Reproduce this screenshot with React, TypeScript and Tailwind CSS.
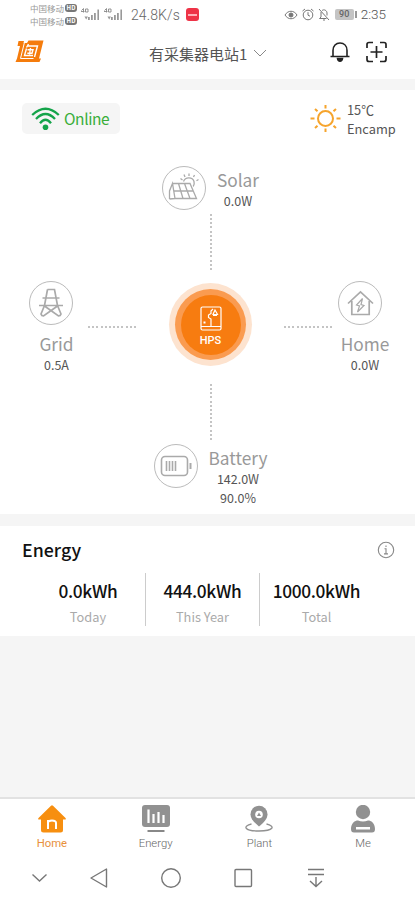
import type { ReactNode } from "react";
import clsx from "clsx";

const stats = [
  { value: "0.0kWh", label: "Today" },
  { value: "444.0kWh", label: "This Year" },
  { value: "1000.0kWh", label: "Total" },
];

function Signal() {
  return (
    <svg width="20" height="13" viewBox="0 0 20 13" fill="#999">
      <path d="M0.5 2.5l2-2v4M0 3.5h3.5M4.5 1h2.5v3h-2.5z" fill="none" stroke="#888" strokeWidth="0.9" />
      <path d="M7 9h1.8v3H7zM10 7h1.8v5H10zM13 5h1.8v7H13zM16.4 1.5H18V12h-1.6z" />
      <path d="M3.5 8.5l1.7 3 1.7-3z" />
    </svg>
  );
}

function Carrier() {
  return (
    <div className="flex h-[13px] items-center gap-px">
      <span className="text-[8.5px] leading-none text-[#999]">中国移动</span>
      <span className="flex h-[8px] w-[12px] items-center justify-center rounded-[3px] bg-[#777] text-[6px] font-bold leading-none text-white">
        HD
      </span>
    </div>
  );
}

function StatusBar() {
  return (
    <div className="flex h-[29px] items-center pl-[30px] pr-[29px] font-['Roboto',sans-serif]">
      <div className="flex w-[51px] flex-col font-['Noto_Sans_CJK_SC',sans-serif]">
        <Carrier />
        <Carrier />
      </div>
      <div className="flex gap-[3px]">
        <Signal />
        <Signal />
      </div>
      <span className="ml-[7px] w-[49px] whitespace-nowrap text-[14px] font-light leading-none tracking-[0.1px] text-[#666]">
        24.8K/s
      </span>
      <span className="ml-[6px] flex h-[13px] w-[13px] items-center justify-center rounded-[3px] bg-[#ee3347]">
        <span className="h-[2px] w-[9px] bg-[#ffb0b8]" />
      </span>
      <div className="ml-auto flex items-center">
        <svg width="14" height="12" viewBox="0 0 14 12" fill="none" stroke="#777" strokeWidth="1">
          <path d="M1 6c3-5 9-5 12 0c-3 5-9 5-12 0z" />
          <circle cx="7" cy="6" r="2" fill="#777" />
        </svg>
        <svg className="ml-[3px]" width="14" height="13" viewBox="0 0 14 13" fill="none" stroke="#777" strokeWidth="1">
          <circle cx="7" cy="7" r="4.8" />
          <path d="M1.5 3l2.5-2M12.5 3L10 1M7 4.2v3l2 1" />
        </svg>
        <svg className="ml-[3px]" width="12" height="13" viewBox="0 0 12 13" fill="none" stroke="#777" strokeWidth="1">
          <path d="M1 1l10 11M3 4v5l-1.5 1.5h7M4 2.6C6 .8 9 2.5 9 5v2.5M5 12h2" />
        </svg>
        <span className="ml-[5px] flex h-[11px] w-[19px] items-center justify-center rounded-[2px] bg-[#c4c4c4] text-[9px] font-medium leading-none text-[#666]">
          90
        </span>
        <span className="ml-px h-[7px] w-[2px] bg-[#999]" />
        <span className="ml-[4px] text-[13.5px] font-light leading-none text-[#555]">2:35</span>
      </div>
    </div>
  );
}

function Header() {
  return (
    <header className="flex h-[50px] items-center pl-[15px] pr-[28px]">
      <svg className="-mt-[6px]" width="29" height="23" viewBox="0 0 29 23">
        <path d="M3.5 1H9L8.5 3H12L13.5 .5H28.5L24 18.500H26L24.500 22H.5L2 18.500L5 6H2.500z" fill="#f57c0c" />
        <path d="M9.3 3L5.5 18.500H18.500" fill="none" stroke="#fff" strokeWidth="1" />
        <path d="M13.500 4L11.500 7.500M12.500 6H22.500L19.500 17M11.500 8.500L9.500 15.500H18M12.500 9.800H18L17 13.300H12.300M15.500 8L14.500 14.500" fill="none" stroke="#fff" strokeWidth="1.4" />
      </svg>
      <div className="-mt-px ml-[105px] flex items-center whitespace-nowrap text-[15px] leading-none text-[#555]">
        有采集器电站1
        <svg className="ml-[6px]" width="14" height="9" viewBox="0 0 14 9" fill="none" stroke="#888" strokeWidth="1">
          <path d="M1 1l6 6l6-6" />
        </svg>
      </div>
      <div className="-mt-[4px] ml-auto flex items-center gap-[15px]">
        <svg width="22" height="22" viewBox="0 0 22 22" fill="none" stroke="#222" strokeWidth="1.6">
          <path d="M4 15.500V9.500C4 4.800 7 2 11 2s7 2.800 7 7.500v6M1.500 15.500h19" />
          <path d="M8.500 17.500c.5 3.600 4.500 3.600 5 0z" fill="#222" />
        </svg>
        <svg width="21" height="22" viewBox="0 0 21 22" fill="none" stroke="#222" strokeWidth="1.7">
          <path d="M1 7V3.500Q1 1.500 3 1.500H7M14 1.500h4q2 0 2 2V7M20 15v3.500q0 2-2 2h-4M7 20.500H3q-2 0-2-2V15M10.500 5v12M4.500 11h12" />
        </svg>
      </div>
    </header>
  );
}

function IconRing({ children }: { children: ReactNode }) {
  return (
    <div className="flex h-[44px] w-[44px] shrink-0 items-center justify-center rounded-full border border-[#bbb]">
      {children}
    </div>
  );
}

function Reading({ name, values, className }: { name: string; values: string[]; className?: string }) {
  return (
    <div className={clsx("flex flex-col items-center whitespace-nowrap", className)}>
      <span className="text-[17.3px] leading-[24px] text-[#999]">{name}</span>
      {values.map((v) => (
        <span key={v} className="text-[12.5px] leading-[18.5px] text-[#555]">
          {v}
        </span>
      ))}
    </div>
  );
}

function VLine() {
  return (
    <div className="ml-[210px] flex h-[56px] flex-col justify-between">
      {Array.from({ length: 14 }, (_, i) => (
        <span key={i} className="h-[2px] w-[2px] bg-[#c4c4c4]" />
      ))}
    </div>
  );
}

function HLine() {
  return (
    <div className="mt-[56px] flex w-[48px] justify-between">
      {Array.from({ length: 12 }, (_, i) => (
        <span key={i} className="h-[2px] w-[2px] bg-[#c4c4c4]" />
      ))}
    </div>
  );
}

function Flow() {
  return (
    <section className="h-[424px] bg-white">
      <div className="flex h-[44px] justify-between pl-[22px] pr-[19px] pt-[13px]">
        <div className="flex h-[31px] w-[98px] items-center rounded-[5px] bg-[#f5f5f5] pl-[9px]">
          <svg width="29" height="24" viewBox="0 0 29 24" fill="none" stroke="#14a44a" strokeWidth="2.3">
            <path d="M1.2 8Q14.5-4.5 27.8 8M5 12Q14.5 2 24 12M9 16.2Q14.5 9.3 20 16.2" />
            <circle cx="14.5" cy="20.3" r="2.8" fill="#14a44a" stroke="none" />
          </svg>
          <span className="ml-[4px] text-[15.5px] leading-none tracking-[-0.4px] text-[#3aae3a]">Online</span>
        </div>
        <div className="flex">
          <svg className="mt-px" width="31" height="29" viewBox="-15.5 -14.5 31 29" fill="none" stroke="#f6a42c" strokeWidth="2">
            <circle r="7.5" />
            <path d="M0-13.5v3.5M0 10v3.5M-15 0h4M11 0h4M-10.5-9.5l2.5 2.3M10.5-9.5l-2.5 2.3M-10.5 9.5l2.5-2.3M10.5 9.5l-2.5-2.3" />
          </svg>
          <div className="-mt-[3px] ml-[6px] flex w-[49px] flex-col whitespace-nowrap text-[12.8px] leading-[19px] text-[#555]">
            <span>15℃</span>
            <span>Encamp</span>
          </div>
        </div>
      </div>

      <div className="mt-[32px] flex h-[44px] pl-[162px]">
        <IconRing>
          <svg width="32" height="30" viewBox="0 0 32 30" fill="none" stroke="#aaa" strokeWidth="1.3">
            <path d="M4.5 10.5H22L28.5 25.5H7L4.5 10.5L1.5 18v8M6 18h19M7 25.5L1.5 26M10.5 10.5L15 25.5M16.5 10.5L22 25.5" />
            <path d="M15.5 8.5c2-5 9-4.5 10.5 0 .6 2.3 0 4-.8 5" />
            <path d="M12.5 5.5l2 1.5M16 1.5l1 2.5M21 .5v2.5M26.5 2L25.5 4M30.5 6.5l-2 1.2" />
          </svg>
        </IconRing>
        <Reading name="Solar" values={["0.0W"]} className="ml-[3px] mt-[2px] w-[58px]" />
      </div>
      <div className="mt-[4px]">
        <VLine />
      </div>

      <div className="flex h-[114px] pl-[28px]">
        <div className="w-[60px] pt-[11px]">
          <div className="ml-px">
            <IconRing>
              <svg width="26" height="30" viewBox="0 0 26 30" fill="none" stroke="#aaa" strokeWidth="1.7">
                <path d="M9.5 1.5h7l3 16 3.5 8.5q-.5 2-2.500 2L6.500 18M9.500 1.500l-3 16L3 26q.5 2 2.500 2L19.500 18M1 17.500h24M4.500 10h17" />
              </svg>
            </IconRing>
          </div>
          <Reading name="Grid" values={["0.5A"]} className="mt-[7px] w-[57px]" />
        </div>
        <HLine />
        <div className="ml-[33px] mt-[13px] flex h-[83px] w-[83px] items-center justify-center rounded-full bg-[#fde3cf]">
          <div className="flex h-[71px] w-[71px] items-center justify-center rounded-full bg-[#fa9b50]">
            <div className="flex h-[60px] w-[60px] flex-col items-center rounded-full bg-[#f77c10] pt-[11px]">
              <svg width="22" height="25" viewBox="0 0 22 25" fill="none" stroke="#fff" strokeWidth="1.2">
                <rect x="1" y="1" width="20" height="23" rx="1.5" />
                <path d="M1 20.5h20M11 20v-7l-2.500-1.500V9l2.500-1.500V5l2-2M15 4l-2 4.500h4.500zM13 9.500h4" />
                <path d="M4.5 15.5v2" strokeWidth="2" />
              </svg>
              <span className="mt-[4px] font-['Roboto',sans-serif] text-[11px] font-medium leading-[12px] text-white">HPS</span>
            </div>
          </div>
        </div>
        <div className="ml-[32px]">
          <HLine />
        </div>
        <div className="ml-[6px] pt-[11px]">
          <IconRing>
            <svg width="27" height="26" viewBox="0 0 27 26" fill="none" stroke="#aaa" strokeWidth="1.7">
              <path d="M1 13.5L13.5 1.8L26 13.5M4.8 11v13.5h17.4V11" />
              <path d="M15.5 8.5L9.5 15l3 1-2 6 6.5-6.5-3-1z" strokeWidth="1.2" />
            </svg>
          </IconRing>
          <Reading name="Home" values={["0.0W"]} className="mt-[7px] w-[54px]" />
        </div>
      </div>

      <VLine />
      <div className="mt-[4px] flex pl-[154px]">
        <IconRing>
          <svg width="32" height="22" viewBox="0 0 32 22" fill="none" stroke="#aaa" strokeWidth="1.6">
            <rect x="1.5" y="1.5" width="26" height="19" rx="3.5" />
            <path d="M30.5 8v6" strokeWidth="2" />
            <path d="M6.5 6v10M9.5 6v10M12.5 6v10M15.5 6v10" strokeWidth="1.6" />
          </svg>
        </IconRing>
        <Reading name="Battery" values={["142.0W", "90.0%"]} className="ml-[9px] mt-[2px] w-[62px]" />
      </div>
    </section>
  );
}

function EnergyCard() {
  return (
    <section className="mt-[12px] h-[110px] bg-white">
      <div className="flex h-[47px] items-center justify-between pl-[22px] pr-[20px]">
        <h2 className="pt-px text-[17.8px] font-medium leading-none text-[#111]">Energy</h2>
        <svg width="18" height="18" viewBox="0 0 18 18" fill="none" stroke="#888" strokeWidth="1.1">
          <circle cx="9" cy="9" r="7.7" />
          <path d="M7.5 7.8H9v5M7 12.9h4M9 4.6v1.4" />
        </svg>
      </div>
      <div className="flex pl-[31px]">
        {stats.map((s, i) => (
          <div
            key={s.label}
            className={clsx("flex h-[53px] w-[114px] flex-col items-center whitespace-nowrap", i > 0 && "border-l border-[#ccc]")}
          >
            <span className="mt-[5px] text-[17.3px] font-medium leading-[25px] tracking-[-0.35px] text-[#111]">{s.value}</span>
            <span className="mt-[4px] text-[12.8px] leading-[19px] text-[#aaa]">{s.label}</span>
          </div>
        ))}
      </div>
    </section>
  );
}

function Tab({ label, active, children }: { label: string; active?: boolean; children: ReactNode }) {
  return (
    <div className="flex flex-1 flex-col items-center pt-[6px]">
      <svg width="30" height="29" viewBox="0 0 30 29">
        {children}
      </svg>
      <span
        className={clsx(
          "mt-[3px] font-['Roboto',sans-serif] text-[11.3px] leading-[13px]",
          active ? "text-[#e8903c]" : "font-light text-[#666]"
        )}
      >
        {label}
      </span>
    </div>
  );
}

function TabBar() {
  return (
    <nav className="flex h-[58px] border-t-2 border-[#e2e2e2] bg-white">
      <Tab label="Home" active>
        <path d="M14 .8q1-.9 2 0L28.5 13q1 1.5-.8 1.5H26V25q0 2.5-2.5 2.5h-17Q4 27.5 4 25V14.5H2.3Q.5 14.5 1.5 13z" fill="#f78f10" />
        <path d="M11 24v-9M11 18q0-2.5 4-2.5t4 2.5v6" fill="none" stroke="#fff" strokeWidth="2" />
      </Tab>
      <Tab label="Energy">
        <rect x="1" y="0" width="28" height="22" rx="3" fill="#919191" />
        <path d="M7.5 4.5V18M12.5 9v9M17.5 7v11M22.5 10v8" stroke="#fff" strokeWidth="2.2" />
        <path d="M6.5 26h17" stroke="#888" strokeWidth="2" />
      </Tab>
      <Tab label="Plant">
        <path d="M7.5 19C-1.5 21 0 26 15 26s16.5-5 7.5-7" fill="none" stroke="#919191" strokeWidth="1.3" />
        <path d="M15 21.5C10 17.5 6.5 13.5 6.5 9.2a8.5 8.5 0 0 1 17 0c0 4.3-3.5 8.3-8.5 12.3z" fill="#919191" />
        <circle cx="15" cy="9.5" r="3.8" fill="#fff" />
        <path d="M15 7.5l2 3.5h-4z" fill="#919191" />
      </Tab>
      <Tab label="Me">
        <circle cx="15" cy="7" r="7.2" fill="#919191" />
        <path d="M3 24c0-6 4-8.5 7-8.5q5 2 10 0c3 0 7 2.5 7 8.5q0 3.5-3 3.5H6q-3 0-3-3.5z" fill="#919191" />
        <rect x="8" y="22" width="14" height="2.5" fill="#fff" />
      </Tab>
    </nav>
  );
}

function SystemKeys() {
  return (
    <div className="flex h-[45px] bg-white pl-[29px]">
      <svg className="mt-[12px]" width="310" height="22" viewBox="0 0 310 22" fill="none" stroke="#777" strokeWidth="1.4">
        <path d="M3.5 7.5l7 6.5 7-6.5" />
        <path d="M77.5 2v18L62 11z" strokeLinejoin="round" />
        <circle cx="142" cy="11" r="9.3" />
        <rect x="206" y="2.5" width="16.5" height="17" rx="1" />
        <path d="M279 2.5h16M279 7.5h16M287 10v9.5M281 14l6 5.5 6-5.5" />
      </svg>
    </div>
  );
}

export default function App() {
  return (
    <div className="flex h-[900px] w-[415px] flex-col overflow-hidden bg-[#f5f5f5] font-['Noto_Sans_CJK_SC',sans-serif]">
      <div className="mb-[11px] h-[79px] bg-white">
        <StatusBar />
        <Header />
      </div>
      <Flow />
      <EnergyCard />
      <div className="mt-auto">
        <TabBar />
        <SystemKeys />
      </div>
    </div>
  );
}
